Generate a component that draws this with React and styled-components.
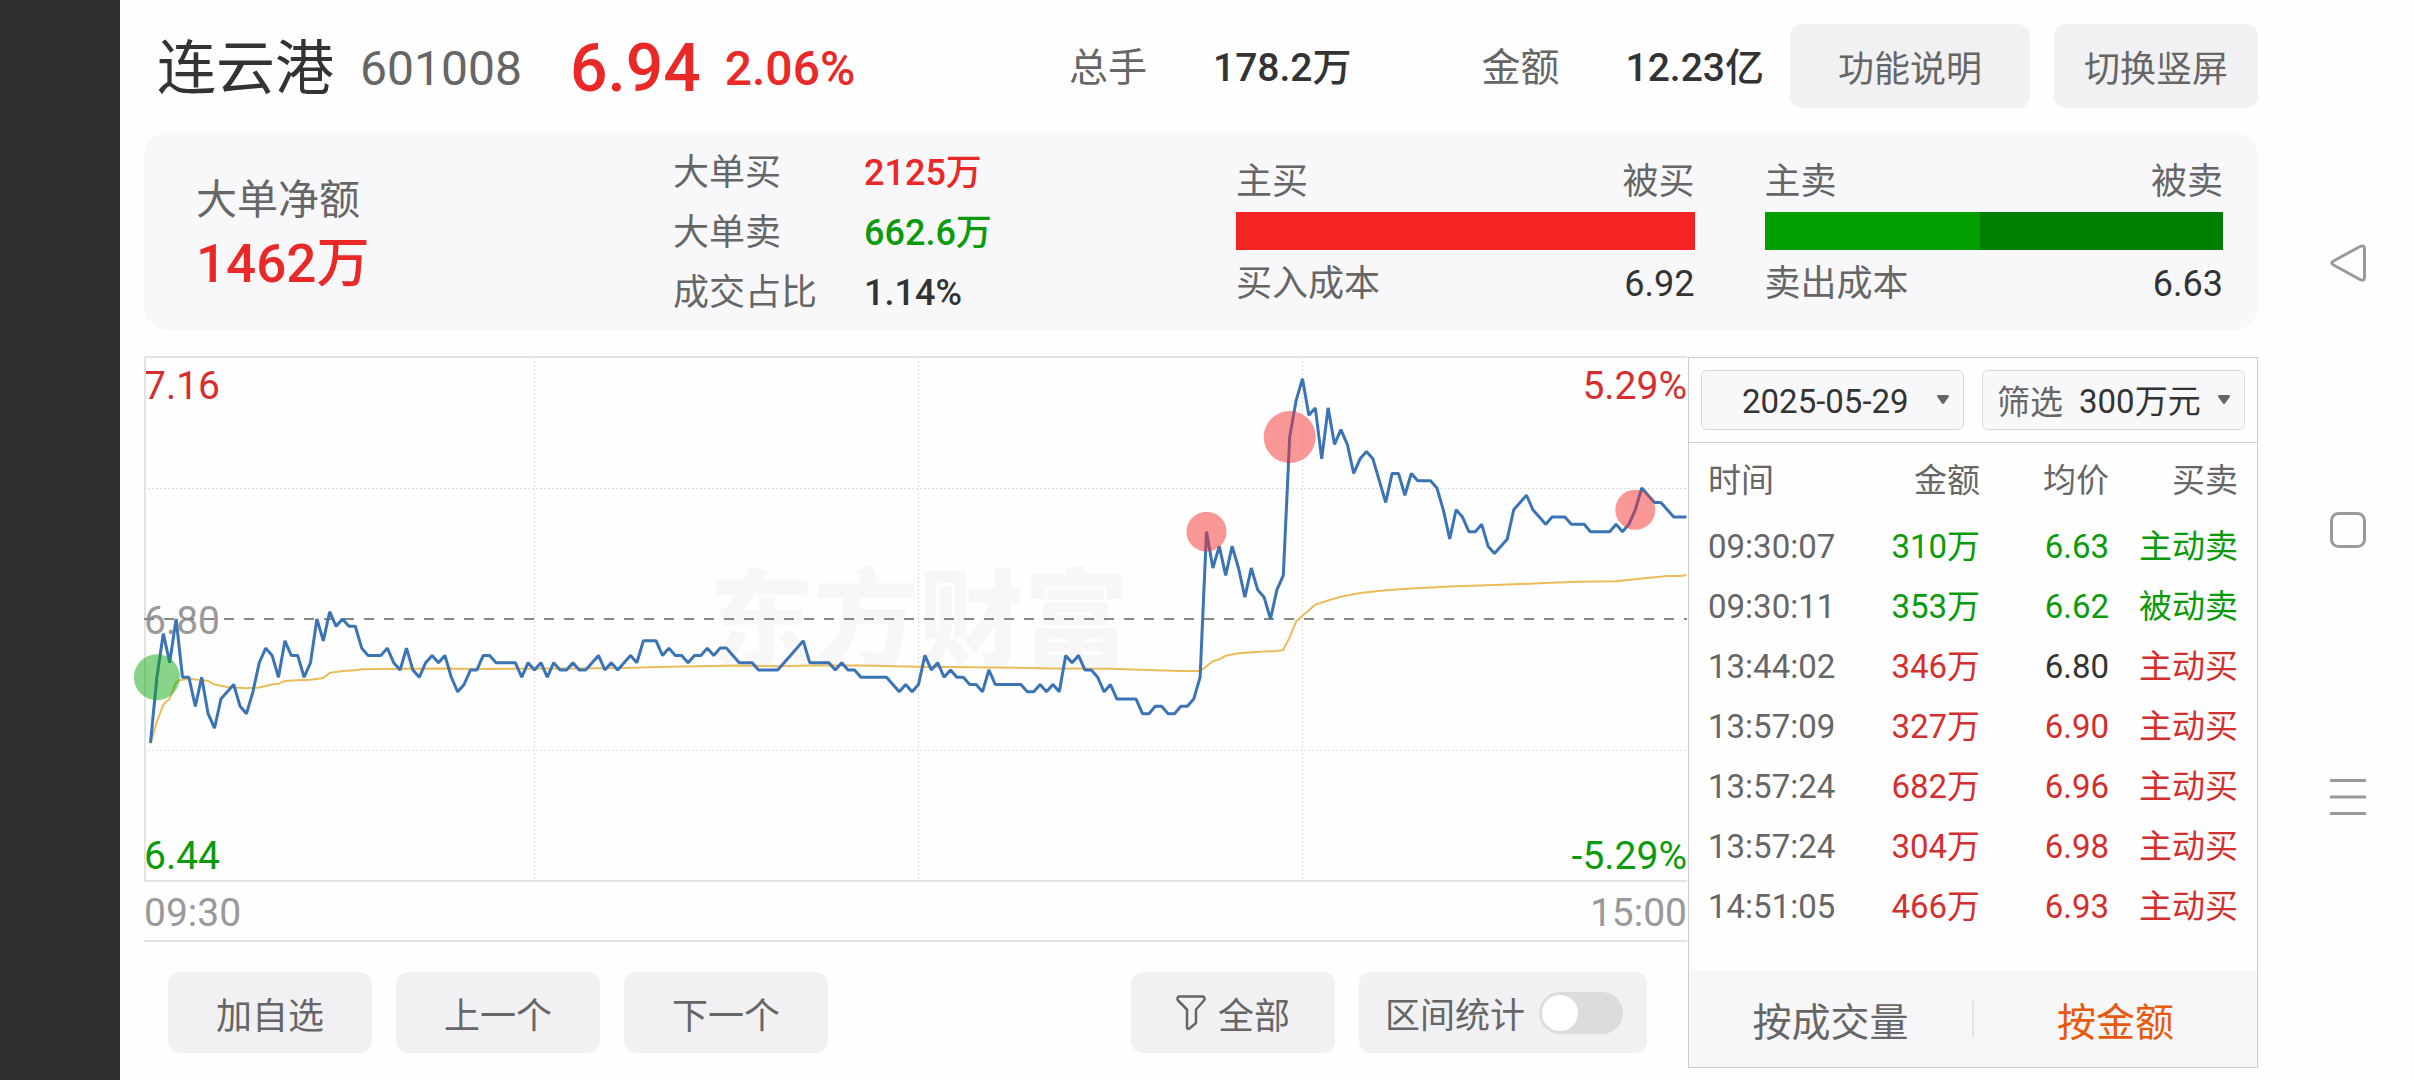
import React, { useState } from "react";
import styled, { createGlobalStyle } from "styled-components";

const RED = "#e92828";
const GREEN = "#0a9a0a";

// one price per minute, in cents above or below the previous close
const BASE = 680;
const prices = [
  -17, -8, -2, -6, 0, -8, -8, -12, -8, -13, -15, -11, -10, -9, -12, -13, -10, -6, -4, -5,
  -8, -3, -5, -5, -8, -6, 0, -3, 1, -1, 0, -1, -1, -4, -5, -5, -5, -4, -6, -7,
  -4, -7, -8, -6, -5, -6, -5, -8, -10, -9, -7, -7, -5, -5, -6, -6, -6, -6, -8, -6,
  -7, -6, -8, -6, -7, -7, -6, -7, -7, -6, -5, -7, -6, -7, -6, -5, -6, -3, -3, -3,
  -5, -4, -5, -5, -6, -5, -5, -4, -5, -4, -4, -5, -6, -6, -6, -7, -7, -7, -7, -6,
  -5, -4, -3, -6, -6, -6, -6, -7, -6, -7, -7, -8, -8, -8, -8, -8, -9, -10, -9, -10,
  -9, -5, -7, -6, -8, -7, -8, -8, -9, -9, -10, -7, -9, -9, -9, -9, -9, -10, -10, -9,
  -10, -9, -10, -5, -6, -5, -7, -7, -8, -10, -9, -11, -11, -11, -11, -13, -13, -12, -12, -13,
  -13, -12, -12, -11, -8, 12, 7, 10, 6, 10, 7, 3, 7, 4, 3, 0, 4, 6, 25, 30,
  33, 28, 29, 22, 29, 24, 26, 24, 20, 22, 23, 22, 19, 16, 20, 20, 17, 20, 19, 19,
  19, 18, 15, 11, 15, 14, 12, 12, 13, 10, 9, 10, 11, 15, 16, 17, 15, 14, 13, 14,
  14, 14, 13, 13, 13, 12, 12, 12, 12, 13, 12, 13, 15, 18, 17, 16, 16, 15, 14, 14,
  14,
];

const average = [
  [0, -17.1], [1, -14.1], [2, -11.8], [3, -10.9], [4, -8.7], [4.5, -8.4], [6, -8.2],
  [9, -8.5], [10, -9], [12, -9.35], [15, -9.5], [17, -9.4], [19, -9], [20, -8.9],
  [21, -8.5], [23, -8.4], [25, -8.35], [27, -8.1], [28, -7.4], [30, -7.15], [32, -7.05],
  [33, -6.9], [36, -6.87], [45, -6.8], [51, -6.87], [65, -6.8], [74, -6.73], [81, -6.55],
  [92, -6.4], [98, -6.5], [103, -6.4], [111, -6.4], [120, -6.55], [132, -6.65],
  [141, -6.8], [150, -6.83], [157, -7.05], [161, -7.15], [164, -7.15], [165, -6.5],
  [166, -5.8], [167, -5.55], [168, -5.05], [170, -4.7], [174, -4.45], [176, -4.4],
  [177, -4.25], [178, -2.5], [179, -0.35], [180, 0.45], [182, 1.97], [184, 2.55],
  [186, 3.07], [189, 3.57], [193, 3.94], [197, 4.2], [204, 4.5], [210, 4.67],
  [217, 4.9], [223, 5.1], [229, 5.2], [233, 5.55], [237, 5.9], [239, 5.9], [240, 6],
];

const bigOrders = [
  { minute: 1, r: 23, fill: "#12a812" },
  { minute: 165, r: 20, fill: "#f33030" },
  { minute: 178, r: 26, fill: "#f33030" },
  { minute: 232, r: 20, fill: "#f33030" },
];

const trades = [
  { time: "09:30:07", amount: "310万", price: 663, side: "主动卖" },
  { time: "09:30:11", amount: "353万", price: 662, side: "被动卖" },
  { time: "13:44:02", amount: "346万", price: 680, side: "主动买" },
  { time: "13:57:09", amount: "327万", price: 690, side: "主动买" },
  { time: "13:57:24", amount: "682万", price: 696, side: "主动买" },
  { time: "13:57:24", amount: "304万", price: 698, side: "主动买" },
  { time: "14:51:05", amount: "466万", price: 693, side: "主动买" },
];

const px = (minute) => 6.5 + minute * 6.4;
const py = (cents) => 263 - cents * 7.28;
const toPoints = (list) => list.map(([m, c]) => `${px(m)},${py(c)}`).join(" ");

const priceColor = (price) => {
  if (price === BASE) return "#333";
  return price > BASE ? "#d32f2f" : GREEN;
};

const Chart = () => (
  <ChartBox>
    <Watermark>东方财富</Watermark>
    <AxisLabels>
      <AxisRow>
        <Axis color="#d32f2f">7.16</Axis>
        <Axis color="#d32f2f">5.29%</Axis>
      </AxisRow>
      <AxisRow>
        <Axis color="#999">6.80</Axis>
      </AxisRow>
      <AxisRow>
        <Axis color={GREEN}>6.44</Axis>
        <Axis color={GREEN}>-5.29%</Axis>
      </AxisRow>
    </AxisLabels>
    <Plot viewBox="0 0 1543 526" preserveAspectRatio="none" aria-hidden="true">
      <g stroke="#dcdcdc" strokeWidth="1" strokeDasharray="2 2">
        <path d="M0 132.5H1543M0 394.5H1543" />
        <path d="M390.5 1V525M774.5 1V525M1158.5 1V525" />
      </g>
      <path d="M1543 1H1V525H1543" fill="none" stroke="#e3e3e3" strokeWidth="2" />
      <path d="M0 263H1543" stroke="#888" strokeWidth="2" strokeDasharray="10 10" />
      <polyline points={toPoints(average)} fill="none" stroke="#eabb58" strokeWidth="2" />
      <polyline
        points={toPoints(prices.map((c, i) => [i, c]))}
        fill="none"
        stroke="#3a74b4"
        strokeWidth="3"
        strokeLinejoin="bevel"
      />
      {bigOrders.map((o) => (
        <circle
          key={o.minute}
          cx={px(o.minute)}
          cy={py(prices[o.minute])}
          r={o.r}
          fill={o.fill}
          fillOpacity="0.5"
        />
      ))}
    </Plot>
  </ChartBox>
);

const Arrow = () => (
  <ArrowIcon viewBox="0 0 12 9" aria-hidden="true">
    <path d="M1 0H11Q12 0 12 1.5L7.2 8.2Q6 9.6 4.8 8.2L0 1.5Q0 0 1 0Z" fill="#666" />
  </ArrowIcon>
);

const App = () => {
  const [rangeStats, setRangeStats] = useState(false);
  const [sortBy, setSortBy] = useState("amount");

  return (
    <>
      <GlobalStyle />
      <Screen>
        <CutoutBar />
        <Main>
          <Header>
            <Quote>
              <StockName>连云港</StockName>
              <StockCode>601008</StockCode>
              <LastPrice>6.94</LastPrice>
              <Change>2.06%</Change>
            </Quote>
            <Stats>
              <Stat>
                <span>总手</span>
                <strong>178.2万</strong>
              </Stat>
              <Stat>
                <span>金额</span>
                <strong>12.23亿</strong>
              </Stat>
            </Stats>
            <HeaderButtons>
              <Button $width={240} $height={84}>功能说明</Button>
              <Button $width={204} $height={84}>切换竖屏</Button>
            </HeaderButtons>
          </Header>

          <Summary>
            <NetAmount>
              <span>大单净额</span>
              <strong>1462万</strong>
            </NetAmount>
            <OrderList>
              <dt>大单买</dt>
              <OrderValue color={RED}>2125万</OrderValue>
              <dt>大单卖</dt>
              <OrderValue color={GREEN}>662.6万</OrderValue>
              <dt>成交占比</dt>
              <OrderValue color="#333">1.14%</OrderValue>
            </OrderList>
            <Ratios>
              <Ratio>
                <RatioRow>
                  <span>主买</span>
                  <span>被买</span>
                </RatioRow>
                <Bar color="#f52424">
                  <BarFill color="#f52424" style={{ width: "100%" }} />
                </Bar>
                <RatioRow>
                  <span>买入成本</span>
                  <Cost>6.92</Cost>
                </RatioRow>
              </Ratio>
              <Ratio>
                <RatioRow>
                  <span>主卖</span>
                  <span>被卖</span>
                </RatioRow>
                <Bar color="#008000">
                  <BarFill color="#00a000" style={{ width: "47%" }} />
                </Bar>
                <RatioRow>
                  <span>卖出成本</span>
                  <Cost>6.63</Cost>
                </RatioRow>
              </Ratio>
            </Ratios>
          </Summary>

          <Body>
            <ChartColumn>
              <Chart />
              <TimeAxis>
                <Axis color="#999">09:30</Axis>
                <Axis color="#999">15:00</Axis>
              </TimeAxis>
              <Toolbar>
                <Button $width={204} $height={81}>加自选</Button>
                <Button $width={204} $height={81}>上一个</Button>
                <Button $width={204} $height={81}>下一个</Button>
                <Spacer />
                <Button $width={204} $height={81}>
                  <FunnelIcon viewBox="0 0 30 36" aria-hidden="true">
                    <path d="M3 1.500H27Q29.500 2.500 28 5.500L20 14.500V28L13.500 33.500Q11 34.500 11 32V14.500L2 5.500Q.5 2.500 3 1.500Z" />
                  </FunnelIcon>
                  全部
                </Button>
                <SwitchBox>
                  区间统计
                  <Switch
                    type="checkbox"
                    checked={rangeStats}
                    onChange={(e) => setRangeStats(e.target.checked)}
                  />
                </SwitchBox>
              </Toolbar>
            </ChartColumn>

            <TradePanel>
              <Filters>
                <SelectBox>
                  <Select aria-label="日期" $inset={40}>
                    <option>2025-05-29</option>
                  </Select>
                  <Arrow />
                </SelectBox>
                <SelectBox>
                  <SelectLabel htmlFor="threshold">筛选</SelectLabel>
                  <Select id="threshold" $inset={16}>
                    <option>300万元</option>
                  </Select>
                  <Arrow />
                </SelectBox>
              </Filters>
              <TradeTable>
                <thead>
                  <tr>
                    <th>时间</th>
                    <th>金额</th>
                    <th>均价</th>
                    <th>买卖</th>
                  </tr>
                </thead>
                <tbody>
                  {trades.map((t, i) => {
                    const sideColor = t.side.endsWith("买") ? "#d32f2f" : GREEN;
                    return (
                      <tr key={i}>
                        <Cell color="#666">{t.time}</Cell>
                        <Cell color={sideColor}>{t.amount}</Cell>
                        <Cell color={priceColor(t.price)}>{(t.price / 100).toFixed(2)}</Cell>
                        <Cell color={sideColor}>{t.side}</Cell>
                      </tr>
                    );
                  })}
                </tbody>
              </TradeTable>
              <Tabs>
                <Tab $active={sortBy === "volume"} onClick={() => setSortBy("volume")}>
                  按成交量
                </Tab>
                <TabDivider />
                <Tab $active={sortBy === "amount"} onClick={() => setSortBy("amount")}>
                  按金额
                </Tab>
              </Tabs>
            </TradePanel>
          </Body>
        </Main>
        <SystemNav>
          <NavButton aria-label="返回">
            <svg viewBox="0 0 40 40">
              <path d="M32 3.500Q36.500 1.500 36.500 6V34Q36.500 38.500 32 36.500L5.500 22Q2 20 5.500 18Z" />
            </svg>
          </NavButton>
          <NavButton aria-label="主页">
            <svg viewBox="0 0 40 40">
              <rect x="3.500" y="3.500" width="33" height="33" rx="7" />
            </svg>
          </NavButton>
          <NavButton aria-label="最近任务">
            <svg viewBox="0 0 40 40">
              <path d="M2 3.500H38M2 20H38M2 36.500H38" />
            </svg>
          </NavButton>
        </SystemNav>
      </Screen>
    </>
  );
};

const GlobalStyle = createGlobalStyle`
  * {
    box-sizing: border-box;
  }
  body {
    margin: 0;
    background-color: #fefefe;
    color: #666;
    font-family: Roboto, "Noto Sans CJK SC", sans-serif;
  }
  button, select {
    font-family: inherit;
    cursor: pointer;
  }
`;

const Screen = styled.div`
  display: grid;
  grid-template-columns: 120px minmax(0, 1fr) 156px;
  min-height: 100vh;
`;

const CutoutBar = styled.div`
  background-color: #303030;
`;

const Main = styled.main`
  padding-left: 24px;
`;

const Header = styled.header`
  display: flex;
  align-items: center;
  height: 132px;
  padding-left: 13px;
  line-height: 84px;
  white-space: nowrap;
`;

const Quote = styled.div`
  display: flex;
  align-items: center;
  padding-top: 6px;
`;

const StockName = styled.h1`
  margin: 0;
  font-size: 59px;
  font-weight: normal;
  color: #333;
`;

const StockCode = styled.span`
  margin-left: 26px;
  font-size: 48px;
`;

const LastPrice = styled.span`
  margin-left: 48px;
  font-size: 66px;
  font-weight: 500;
  color: ${RED};
`;

const Change = styled.span`
  margin-left: 24px;
  font-size: 48px;
  font-weight: 500;
  color: ${RED};
`;

const Stats = styled.div`
  display: flex;
  gap: 130px;
  margin-left: auto;
  padding-top: 3px;
`;

const Stat = styled.div`
  display: flex;
  gap: 66px;
  font-size: 39px;
  strong {
    font-weight: 500;
    color: #333;
  }
`;

const HeaderButtons = styled.div`
  display: flex;
  gap: 24px;
  margin-left: 26px;
`;

const Button = styled.button`
  display: flex;
  align-items: center;
  justify-content: center;
  gap: 12px;
  width: ${(p) => p.$width}px;
  height: ${(p) => p.$height}px;
  padding: 0;
  border: none;
  border-radius: 12px;
  background-color: #f1f1f4;
  color: #666;
  font-size: 36px;
`;

const Summary = styled.section`
  display: grid;
  grid-template-columns: 477px 563px minmax(0, 1fr);
  align-items: center;
  height: 198px;
  padding: 0 35px 0 52px;
  border-radius: 24px;
  background-color: #f8f8fa;
`;

const NetAmount = styled.div`
  display: flex;
  flex-direction: column;
  padding-top: 2px;
  font-size: 41px;
  line-height: 64px;
  strong {
    font-size: 53px;
    font-weight: 500;
    color: ${RED};
  }
`;

const OrderList = styled.dl`
  display: grid;
  grid-template-columns: 191px 1fr;
  margin: 0;
  padding-top: 4px;
  font-size: 36px;
  line-height: 60px;
`;

const OrderValue = styled.dd`
  margin: 0;
  font-weight: 500;
  color: ${(p) => p.color};
`;

const Ratios = styled.div`
  display: grid;
  grid-template-columns: 1fr 1fr;
  gap: 70px;
`;

const Ratio = styled.div`
  display: flex;
  flex-direction: column;
`;

const RatioRow = styled.div`
  display: flex;
  justify-content: space-between;
  padding-top: 4px;
  font-size: 36px;
  line-height: 60px;
`;

const Cost = styled.span`
  color: #333;
`;

const Bar = styled.div`
  height: 38px;
  background-color: ${(p) => p.color};
`;

const BarFill = styled.div`
  height: 100%;
  background-color: ${(p) => p.color};
`;

const Body = styled.div`
  display: grid;
  grid-template-columns: minmax(0, 1fr) 571px;
  margin-top: 26px;
`;

const ChartColumn = styled.div`
  display: flex;
  flex-direction: column;
`;

const ChartBox = styled.div`
  position: relative;
  height: 526px;
`;

const Plot = styled.svg`
  position: relative;
  display: block;
  width: 100%;
  height: 100%;
  overflow: visible;
`;

const Watermark = styled.div`
  position: absolute;
  inset: 0;
  display: flex;
  align-items: center;
  justify-content: center;
  padding: 0 0 16px 6px;
  font-size: 105px;
  font-weight: 900;
  color: #f7f7f7;
`;

const AxisLabels = styled.div`
  position: absolute;
  inset: 2px 0 -2px;
  display: flex;
  flex-direction: column;
  justify-content: space-between;
  padding: 2px 0;
`;

const AxisRow = styled.div`
  display: flex;
  justify-content: space-between;
`;

const Axis = styled.span`
  font-size: 39px;
  line-height: 52px;
  color: ${(p) => p.color};
`;

const TimeAxis = styled.div`
  display: flex;
  align-items: center;
  justify-content: space-between;
  height: 60px;
  padding-top: 4px;
  border-bottom: 2px solid #e3e3e3;
`;

const Toolbar = styled.div`
  display: flex;
  gap: 24px;
  padding: 30px 40px 27px 24px;
`;

const Spacer = styled.div`
  flex: 1;
`;

const FunnelIcon = styled.svg`
  width: 30px;
  height: 36px;
  fill: none;
  stroke: #666;
  stroke-width: 2.5;
  stroke-linejoin: round;
`;

const SwitchBox = styled.label`
  display: flex;
  align-items: center;
  justify-content: space-between;
  width: 288px;
  height: 81px;
  padding: 0 24px 0 26px;
  border-radius: 12px;
  background-color: #f1f1f4;
  font-size: 35px;
`;

const Switch = styled.input`
  appearance: none;
  width: 84px;
  height: 42px;
  margin: 0;
  padding: 3px;
  border-radius: 21px;
  background-color: #dcdcde;
  cursor: pointer;
  &::before {
    content: "";
    display: block;
    width: 36px;
    height: 36px;
    border-radius: 50%;
    background-color: #fff;
  }
  &:checked {
    background-color: #e8590c;
  }
  &:checked::before {
    margin-left: auto;
  }
`;

const TradePanel = styled.section`
  display: flex;
  flex-direction: column;
  height: 711px;
  margin: 1px 0 0 1px;
  border: 1px solid #ccc;
`;

const Filters = styled.div`
  display: grid;
  grid-template-columns: 1fr 1fr;
  gap: 18px;
  padding: 12px;
  border-bottom: 1px solid #ccc;
`;

const SelectBox = styled.div`
  position: relative;
  display: flex;
  align-items: center;
  height: 60px;
  border: 1px solid #d8d8de;
  border-radius: 6px;
  background-color: #f8f8fa;
  font-size: 33px;
`;

const SelectLabel = styled.label`
  padding-left: 14px;
  white-space: nowrap;
`;

const Select = styled.select`
  appearance: none;
  flex: 1;
  min-width: 0;
  height: 100%;
  padding: 2px 0 0 ${(p) => p.$inset}px;
  border: none;
  background: none;
  color: #333;
  font-size: 33px;
`;

const ArrowIcon = styled.svg`
  position: absolute;
  right: 14px;
  top: 24px;
  width: 12px;
  height: 9px;
  pointer-events: none;
`;

const TradeTable = styled.table`
  table-layout: fixed;
  width: calc(100% - 38px);
  margin: 0 19px;
  border-collapse: collapse;
  font-size: 33px;
  line-height: 60px;
  white-space: nowrap;
  th {
    height: 74px;
    padding: 2px 0 0;
    font-weight: normal;
    text-align: right;
  }
  th:first-child,
  td:first-child {
    width: 27%;
    text-align: left;
  }
`;

const Cell = styled.td`
  padding: 0;
  text-align: right;
  color: ${(p) => p.color};
`;

const Tabs = styled.div`
  display: flex;
  align-items: center;
  height: 96px;
  margin-top: auto;
  background-color: #f7f7fa;
`;

const Tab = styled.button`
  flex: 1;
  height: 100%;
  padding: 0;
  border: none;
  background: none;
  font-size: 39px;
  color: ${(p) => (p.$active ? "#e8590c" : "#666")};
`;

const TabDivider = styled.div`
  width: 2px;
  height: 36px;
  background-color: #e3e3e6;
`;

const SystemNav = styled.nav`
  display: grid;
  grid-auto-rows: 267px;
  align-content: start;
  padding: 131px 0 0 24px;
`;

const NavButton = styled.button`
  padding: 0;
  border: none;
  background: none;
  svg {
    width: 40px;
    height: 40px;
    fill: none;
    stroke: #9a9a9a;
    stroke-width: 3;
  }
`;

export default App;
